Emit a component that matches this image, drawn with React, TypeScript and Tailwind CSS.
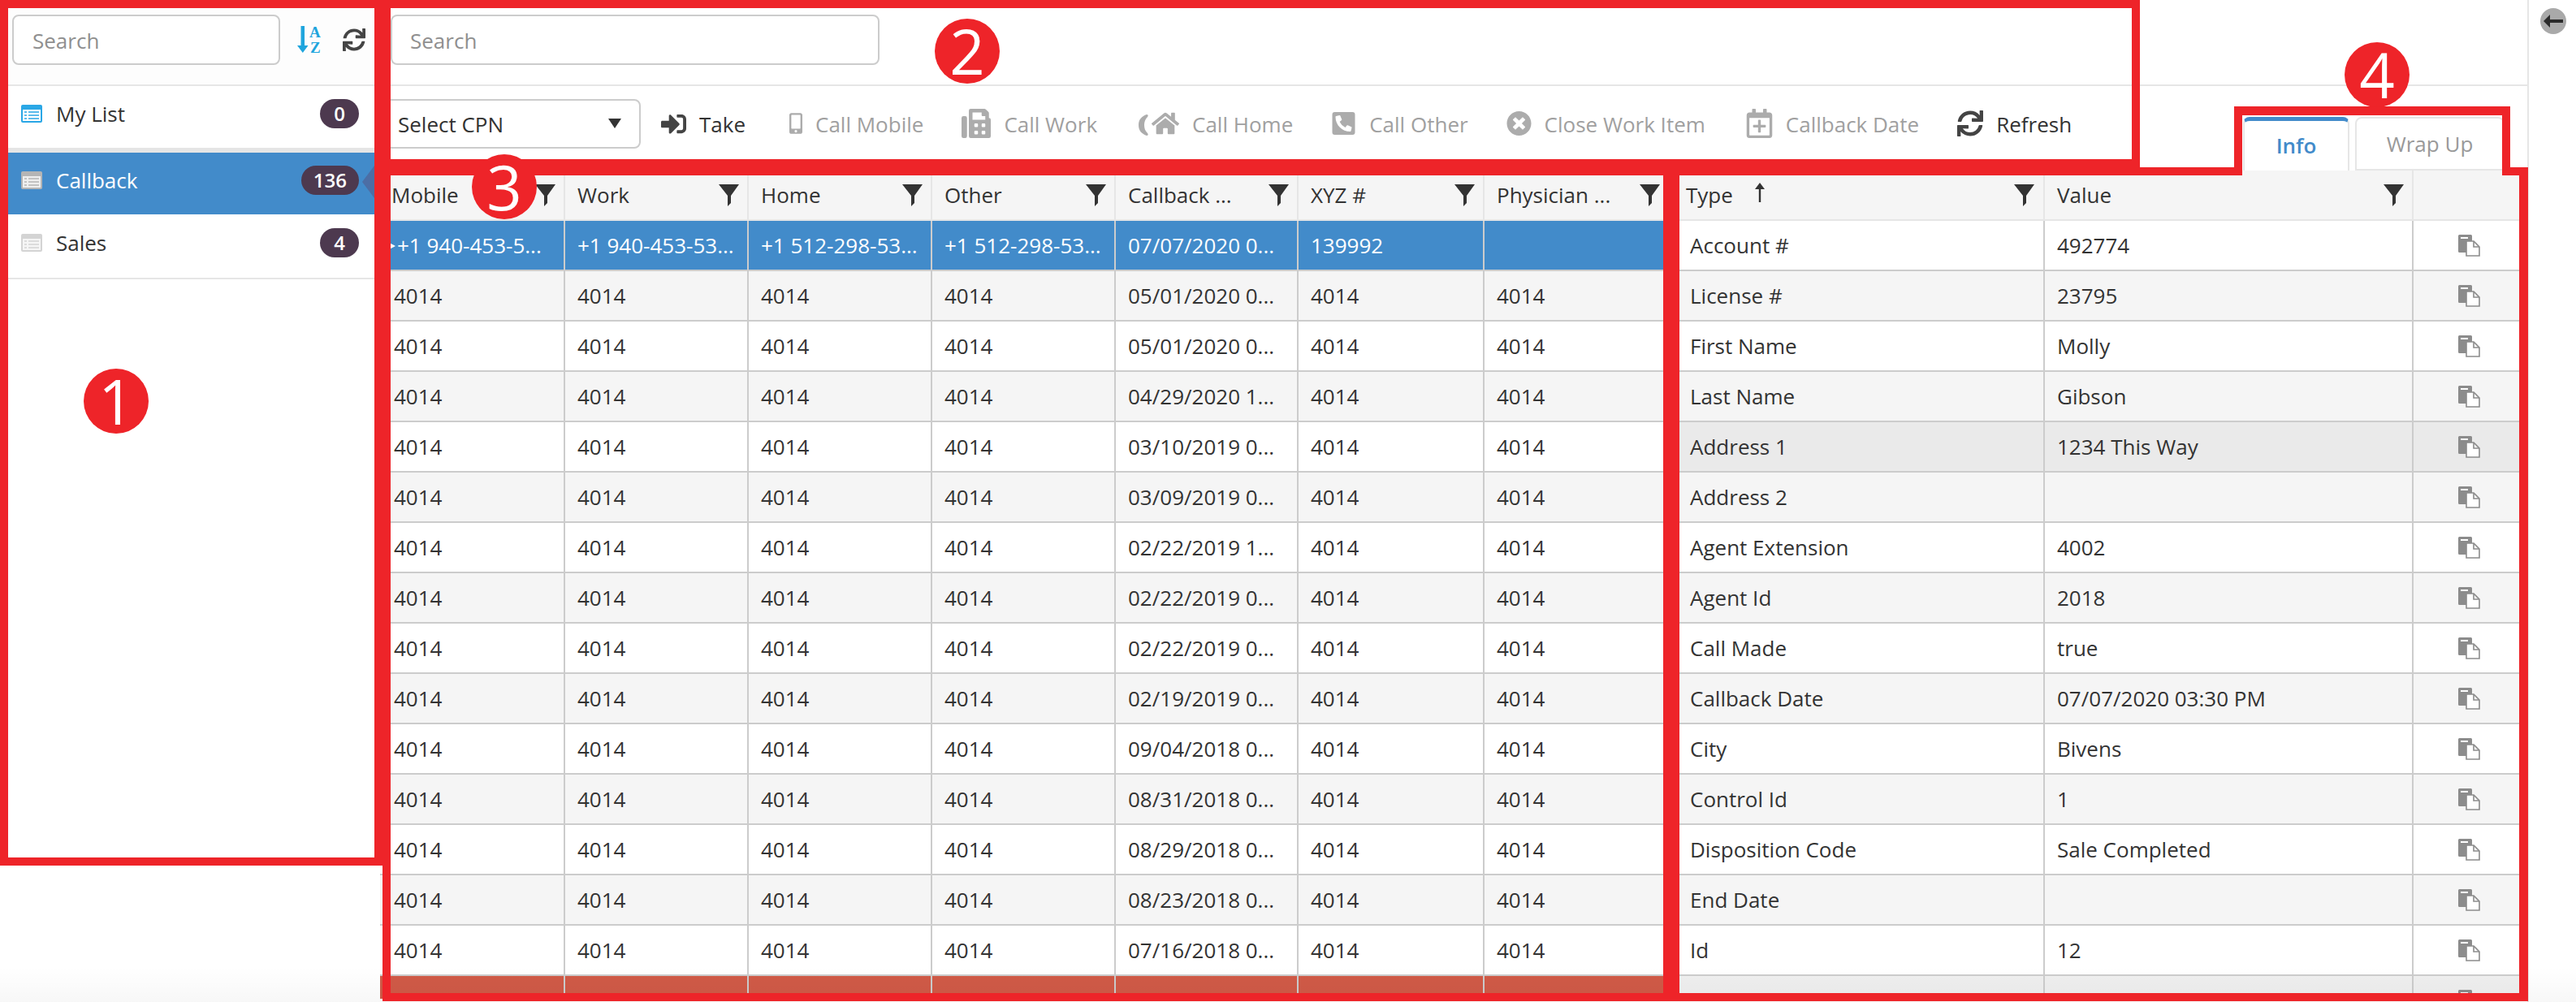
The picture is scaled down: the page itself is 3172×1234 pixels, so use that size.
import React from "react";
import {
  FaSignInAlt,
  FaMobileAlt,
  FaFax,
  FaHome,
  FaPhoneSquareAlt,
  FaTimesCircle,
  FaRegCalendarPlus,
  FaSync,
} from "react-icons/fa";

const Filter = () => (
  <svg width="25" height="27" viewBox="0 0 25 27" className="shrink-0">
    <path d="M0 0H25L15 14V23L11 27V14Z" fill="#333333" />
  </svg>
);

const ListIcon = ({ bg, line }: { bg: string; line: string }) => (
  <svg width="26" height="22" viewBox="0 0 26 22" className="shrink-0">
    <rect x="0" y="0" width="26" height="22" rx="2" fill={bg} />
    <rect x="2" y="6" width="22" height="14" fill={line} />
    <path d="M4 9h3M4 13h3M4 17h3M9 9h13M9 13h13M9 17h13" stroke={bg} strokeWidth="1.6" />
  </svg>
);

const CopyIcon = () => (
  <svg width="27" height="27" viewBox="0 0 27 27">
    <path d="M1.5 0H15.5A1.5 1.5 0 0 1 17 1.5V22H1.5A1.5 1.5 0 0 1 0 20.5V1.5A1.5 1.5 0 0 1 1.5 0Z" fill="#8c8c8c" />
    <rect x="3" y="3" width="9" height="2" fill="#ffffff" />
    <path d="M10 8H19L26 15V26H10Z" fill="#ffffff" stroke="#8c8c8c" strokeWidth="1.6" />
    <path d="M19 8V15H26" fill="none" stroke="#8c8c8c" strokeWidth="1.6" />
  </svg>
);

const SortAz = () => (
  <svg width="30" height="34" viewBox="0 0 30 34" className="shrink-0 overflow-visible">
    <path d="M4.5 0H9V24H13.5L6.8 33L0 24H4.5Z" fill="#1fa5dd" />
    <text x="15" y="14" fontFamily="'Liberation Serif',serif" fontWeight="700" fontSize="19" fill="#1fa5dd">A</text>
    <text x="16" y="33" fontFamily="'Liberation Serif',serif" fontWeight="700" fontSize="19" fill="#1fa5dd">Z</text>
  </svg>
);

const Badge = ({ children }: { children: React.ReactNode }) => (
  <span className="ml-auto mr-[26px] flex h-[36px] min-w-[48px] items-center justify-center rounded-[18px] bg-[#4d394f] px-[15px] text-[24px] font-semibold text-white">
    {children}
  </span>
);

const th = "h-[62px] border-b-2 border-r-2 border-[#e6e6e6] bg-[#f5f5f5] p-0 text-left font-normal";
const td = "h-[62px] border-b-2 border-r-2 border-[#cccccc] p-0 pl-[15px] text-left font-normal whitespace-nowrap overflow-hidden";

const leftHead = ["Mobile", "Work", "Home", "Other", "Callback ...", "XYZ #", "Physician ..."];
const dates = [
  "05/01/2020 0...",
  "05/01/2020 0...",
  "04/29/2020 1...",
  "03/10/2019 0...",
  "03/09/2019 0...",
  "02/22/2019 1...",
  "02/22/2019 0...",
  "02/22/2019 0...",
  "02/19/2019 0...",
  "09/04/2018 0...",
  "08/31/2018 0...",
  "08/29/2018 0...",
  "08/23/2018 0...",
  "07/16/2018 0...",
];
const phones = ["+1 940-453-5...", "+1 940-453-53...", "+1 512-298-53...", "+1 512-298-53..."];

const info: [string, string][] = [
  ["Account #", "492774"],
  ["License #", "23795"],
  ["First Name", "Molly"],
  ["Last Name", "Gibson"],
  ["Address 1", "1234 This Way"],
  ["Address 2", ""],
  ["Agent Extension", "4002"],
  ["Agent Id", "2018"],
  ["Call Made", "true"],
  ["Callback Date", "07/07/2020 03:30 PM"],
  ["City", "Bivens"],
  ["Control Id", "1"],
  ["Disposition Code", "Sale Completed"],
  ["End Date", ""],
  ["Id", "12"],
  ["Name", "sample label"],
];

const LeftTable = () => (
  <div className="h-full w-[1592px] shrink-0 overflow-hidden">
    <table className="w-[1592px] table-fixed border-separate border-spacing-0">
      <colgroup>
        <col className="w-[228px]" />
        <col className="w-[226px]" />
        <col className="w-[226px]" />
        <col className="w-[226px]" />
        <col className="w-[225px]" />
        <col className="w-[229px]" />
        <col className="w-[232px]" />
      </colgroup>
      <thead>
        <tr>
          {leftHead.map((h, i) => (
            <th key={h} className={th}>
              <div className={i === 6 ? "flex items-center justify-between pl-[15px] pr-[14px]" : i === 0 ? "flex items-center justify-between pl-[14px] pr-[10px]" : "flex items-center justify-between pl-[15px] pr-[10px]"}>
                <span>{h}</span>
                <Filter />
              </div>
            </th>
          ))}
        </tr>
      </thead>
      <tbody>
        <tr className="bg-[#428bca] text-white">
          <td className={td + " relative pl-[21px]"}>
            <span className="absolute left-[2px] top-[22px] h-0 w-0 border-y-[9px] border-l-[17px] border-y-transparent border-l-white" />
            {phones[0]}
          </td>
          <td className={td}>{phones[1]}</td>
          <td className={td}>{phones[2]}</td>
          <td className={td}>{phones[3]}</td>
          <td className={td}>07/07/2020 0...</td>
          <td className={td}>139992</td>
          <td className={td}></td>
        </tr>
        {dates.map((d, r) => (
          <tr key={r} className={r % 2 === 0 ? "bg-[#f5f5f5]" : "bg-white"}>
            <td className={td + " pl-[17px]"}>4014</td>
            <td className={td}>4014</td>
            <td className={td}>4014</td>
            <td className={td}>4014</td>
            <td className={td}>{d}</td>
            <td className={td}>4014</td>
            <td className={td}>4014</td>
          </tr>
        ))}
        <tr className="bg-[#d05a47]">
          <td className={td + " pl-[21px]"}>{phones[0]}</td>
          <td className={td}>{phones[1]}</td>
          <td className={td}>{phones[2]}</td>
          <td className={td}>{phones[3]}</td>
          <td className={td}>06/30/2018 0...</td>
          <td className={td}>4014</td>
          <td className={td}>4014</td>
        </tr>
      </tbody>
    </table>
  </div>
);

const RightTable = () => (
  <div className="h-full w-[1053px] shrink-0 overflow-hidden">
    <table className="w-[1053px] table-fixed border-separate border-spacing-0">
      <colgroup>
        <col className="w-[458px]" />
        <col className="w-[454px]" />
        <col className="w-[141px]" />
      </colgroup>
      <thead>
        <tr>
          <th className={th}>
            <div className="flex items-center pl-[16px] pr-[11px]">
              <span>Type</span>
              <svg width="16" height="24" viewBox="0 0 16 24" className="ml-[25px] mb-[6px] shrink-0">
                <path d="M8 0L14 8H9.2V24H6.8V8H2Z" fill="#333333" />
              </svg>
              <span className="ml-auto">
                <Filter />
              </span>
            </div>
          </th>
          <th className={th}>
            <div className="flex items-center justify-between pl-[15px] pr-[10px]">
              <span>Value</span>
              <Filter />
            </div>
          </th>
          <th className={th}></th>
        </tr>
      </thead>
      <tbody>
        {info.map(([k, v], r) => (
          <tr
            key={k}
            className={
              r === 4 ? "bg-[#eaeaea]" : r === 15 ? "bg-[#efefef]" : r % 2 === 0 ? "bg-white" : "bg-[#f5f5f5]"
            }
          >
            <td className={td + " pl-[21px]"}>{k}</td>
            <td className={td}>{v}</td>
            <td className={td + " pl-[55px]"}>
              <span className="flex items-center">
                <CopyIcon />
              </span>
            </td>
          </tr>
        ))}
      </tbody>
    </table>
  </div>
);

const ToolButton = ({
  icon,
  label,
  disabled,
  ml,
}: {
  icon: React.ReactNode;
  label: string;
  disabled?: boolean;
  ml: string;
}) => (
  <div className={"flex h-[60px] items-center gap-[16px] " + ml + (disabled ? " text-[#a0a0a0]" : " text-[#333333]")}>
    {icon}
    <span className="whitespace-nowrap pt-[3px]">{label}</span>
  </div>
);

const grey = "#acacac";

const CallHomeIcon = () => (
  <span className="flex w-[50px] items-center justify-between">
    <svg width="12" height="26" viewBox="0 0 12 26" className="mt-[4px]">
      <path d="M10 0C4 2 0 6 0 13S4 24 10 26C12 26 12 24 11 23C8 20 7 17 7 13S8 6 11 3C12 2 12 0 10 0Z" fill={grey} />
    </svg>
    <FaHome size={34} color={grey} />
  </span>
);

export default function App() {
  return (
    <div className="relative flex h-[1234px] w-[3172px] overflow-hidden bg-white font-['Open_Sans',sans-serif] text-[26px] text-[#333333]">
      {/* Sidebar */}
      <aside className="h-full w-[468px] shrink-0">
        <div className="flex h-[106px] items-start border-b-2 border-[#e6e6e6] bg-[#fdfdfd] pl-[15px] pt-[18px]">
          <input
            placeholder="Search"
            className="h-[62px] w-[330px] rounded-[8px] border-2 border-[#cccccc] bg-white pl-[23px] pt-[2px] outline-none placeholder:text-[#8f8f8f]"
          />
          <div className="ml-[21px] mt-[14px]">
            <SortAz />
          </div>
          <div className="ml-[26px] mt-[17px]">
            <FaSync size={28} color="#444444" />
          </div>
        </div>
        <div className="flex h-[76px] items-center pb-[8px] pl-[26px]">
          <ListIcon bg="#2aa7e6" line="#ffffff" />
          <span className="ml-[17px]">My List</span>
          <Badge>0</Badge>
        </div>
        <div className="h-[6px] bg-[#e5e5e5]" />
        <div className="relative flex h-[76px] items-center bg-[#428bca] pb-[8px] pl-[26px] text-white">
          <ListIcon bg="#b5b5b5" line="#eeeeee" />
          <span className="ml-[17px]">Callback</span>
          <Badge>136</Badge>
          <span className="absolute left-[446px] top-[16px] h-0 w-0 border-y-[20px] border-r-[15px] border-y-transparent border-r-[#4c6ea5]" />
        </div>
        <div className="flex h-[80px] items-center border-b-2 border-[#e6e6e6] pb-[8px] pl-[26px]">
          <ListIcon bg="#d4d4d4" line="#f5f5f5" />
          <span className="ml-[17px]">Sales</span>
          <Badge>4</Badge>
        </div>
      </aside>

      {/* Main */}
      <main className="flex h-full w-[2646px] shrink-0 flex-col border-r-2 border-[#e6e6e6]">
        <div className="h-[106px] shrink-0 border-b-2 border-[#e6e6e6] pl-[13px] pt-[18px]">
          <input
            placeholder="Search"
            className="h-[62px] w-[602px] rounded-[8px] border-2 border-[#cccccc] bg-white pl-[22px] pt-[2px] outline-none placeholder:text-[#8f8f8f]"
          />
        </div>
        <div className="flex h-[104px] shrink-0">
          <div className="flex h-[76px] items-center pl-[1px] pt-[16px]">
            <div className="flex h-[61px] w-[320px] items-center justify-between rounded-[8px] border-2 border-[#cccccc] bg-white pl-[19px] pr-[22px]">
              <span className="pt-[2px]">Select CPN</span>
              <span className="h-0 w-0 border-x-[8px] border-t-[12px] border-x-transparent border-t-[#333333]" />
            </div>
            <ToolButton ml="ml-[25px]" label="Take" icon={<FaSignInAlt className="h-[31px] w-[31px]" color="#444444" />} />
            <ToolButton ml="ml-[54px]" disabled label="Call Mobile" icon={<FaMobileAlt className="h-[26px] w-[16px]" color={grey} />} />
            <ToolButton ml="ml-[47px]" disabled label="Call Work" icon={<FaFax className="h-[36px] w-[36px]" color={grey} />} />
            <ToolButton ml="ml-[51px]" disabled label="Call Home" icon={<CallHomeIcon />} />
            <ToolButton ml="ml-[47px]" disabled label="Call Other" icon={<FaPhoneSquareAlt className="h-[32px] w-[31px]" color={grey} />} />
            <ToolButton ml="ml-[47px]" disabled label="Close Work Item" icon={<FaTimesCircle className="h-[32px] w-[31px]" color={grey} />} />
            <ToolButton ml="ml-[50px]" disabled label="Callback Date" icon={<FaRegCalendarPlus className="h-[36px] w-[33px]" color={grey} />} />
            <ToolButton ml="ml-[47px]" label="Refresh" icon={<FaSync className="h-[32px] w-[32px]" color="#444444" />} />
          </div>
          <div className="ml-auto mr-[28px] flex items-end gap-[7px]">
            <div className="flex h-[66px] w-[131px] items-center justify-center rounded-t-[8px] border-x-2 border-t-[5px] border-[#e6e6e6] border-t-[#428bca] bg-white font-semibold text-[#428bca]">
              Info
            </div>
            <div className="flex h-[66px] w-[184px] items-center justify-center rounded-t-[8px] border-2 border-[#e6e6e6] bg-white text-[#999999]">
              Wrap Up
            </div>
          </div>
        </div>
        <div className="flex h-[1020px] shrink-0">
          <LeftTable />
          <RightTable />
        </div>
      </main>

      {/* Rail */}
      <div className="flex-1 pl-[14px] pt-[10px]">
        <div className="flex h-[32px] w-[32px] items-center justify-center rounded-full bg-[#a9a9a9]">
          <svg width="24" height="18" viewBox="0 0 24 18">
            <path d="M0 9L8 1V7H24V11H8V17Z" fill="#2b2b2b" />
          </svg>
        </div>
      </div>

      {/* Bottom fade */}
      <div className="pointer-events-none absolute bottom-0 left-0 h-[44px] w-full bg-linear-to-t from-black/3 to-transparent" />

      {/* Annotations */}
      <div className="absolute left-0 top-0 h-[1066px] w-[471px] border-[10px] border-[#ee2429]" />
      <div className="absolute left-[471px] top-0 h-[206px] w-[2164px] border-[10px] border-[#ee2429]" />
      <div className="absolute left-[471px] top-[206px] h-[1027px] w-[1587px] border-[10px] border-[#ee2429]" />
      <div className="absolute left-[2058px] top-[206px] h-[1027px] w-[10px] bg-[#ee2429]" />
      <div className="absolute left-[3102px] top-[206px] h-[1027px] w-[11px] bg-[#ee2429]" />
      <div className="absolute left-[2058px] top-[1223px] h-[10px] w-[1055px] bg-[#ee2429]" />
      <div className="absolute left-[2058px] top-[206px] h-[10px] w-[703px] bg-[#ee2429]" />
      <div className="absolute left-[3081px] top-[206px] h-[10px] w-[32px] bg-[#ee2429]" />
      <div className="absolute left-[2751px] top-[131px] h-[85px] w-[10px] bg-[#ee2429]" />
      <div className="absolute left-[3081px] top-[131px] h-[85px] w-[10px] bg-[#ee2429]" />
      <div className="absolute left-[2751px] top-[131px] h-[11px] w-[340px] bg-[#ee2429]" />

      <div className="absolute left-[103px] top-[454px] flex h-[80px] w-[80px] items-center justify-center rounded-full bg-[#ee2429] text-[76px] leading-none text-white">1</div>
      <div className="absolute left-[1151px] top-[23px] flex h-[80px] w-[80px] items-center justify-center rounded-full bg-[#ee2429] text-[76px] leading-none text-white">2</div>
      <div className="absolute left-[581px] top-[190px] flex h-[80px] w-[80px] items-center justify-center rounded-full bg-[#ee2429] text-[76px] leading-none text-white">3</div>
      <div className="absolute left-[2887px] top-[52px] flex h-[80px] w-[80px] items-center justify-center rounded-full bg-[#ee2429] text-[76px] leading-none text-white">4</div>
    </div>
  );
}
